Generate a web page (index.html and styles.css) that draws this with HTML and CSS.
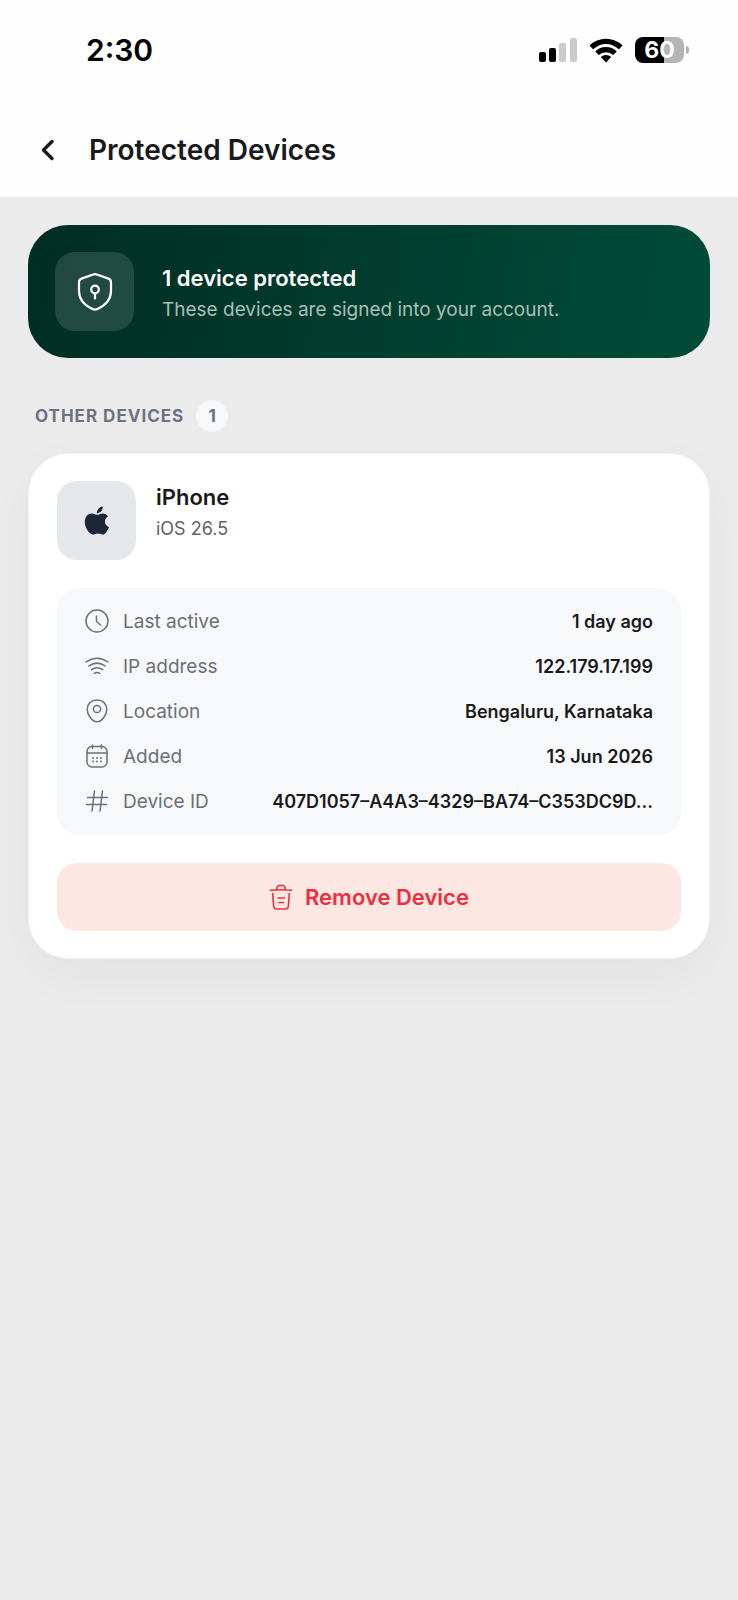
FILE: index.html
```html
<!DOCTYPE html>
<html lang="en">
<head>
  <meta charset="UTF-8">
  <title>Protected Devices</title>
  <meta name="viewport" content="width=device-width, initial-scale=1.0">
  <link rel="stylesheet" href="styles.css">
</head>
<body>
  <header class="top">
    <div class="status-bar">
      <time class="clock">2:30</time>
      <div class="status-icons">
        <svg width="38" height="24" viewBox="0 0 38 24" aria-hidden="true">
          <rect x="0" y="14" width="7" height="10" rx="2"/>
          <rect x="10" y="10" width="7" height="14" rx="2"/>
          <rect x="20" y="5" width="7" height="19" rx="2" fill="#cbcbcb"/>
          <rect x="31" y="0" width="7" height="24" rx="2" fill="#cbcbcb"/>
        </svg>
        <svg width="34" height="25" viewBox="0 0 34 25" aria-hidden="true">
          <path d="M.5 7.600a23.600 23.600 0 0 1 33 0l-3.600 3.700a18.400 18.400 0 0 0-25.800 0z"/>
          <path d="M6.200 13.400a15.400 15.400 0 0 1 21.600 0l-3.700 3.700a10.100 10.100 0 0 0-14.200 0z"/>
          <path d="M11.800 19.100a7.400 7.400 0 0 1 10.400 0L17 24.500z"/>
        </svg>
        <div class="battery">
          <span class="battery-body">60</span>
          <span class="battery-tip"></span>
        </div>
      </div>
    </div>
    <div class="title-bar">
      <button class="back" type="button" aria-label="Back">
        <svg width="14" height="22" viewBox="0 0 14 22" fill="none" stroke="currentColor" stroke-width="3.400" stroke-linecap="round" stroke-linejoin="round">
          <path d="M11 2.500L2.500 11l8.500 8.500"/>
        </svg>
      </button>
      <h1>Protected Devices</h1>
    </div>
  </header>

  <main>
    <section class="banner">
      <div class="tile tile-shield">
        <svg width="36" height="40" viewBox="0 0 36 40" fill="none" stroke="#fff" stroke-width="2.200" stroke-linecap="round" stroke-linejoin="round" aria-hidden="true">
          <path d="M16.200 2.500q1.800-.8 3.600 0L31.500 6.600Q34 7.500 34 10.500V19c0 9-6 14.500-13.500 18q-2.500 1.200-5 0C8 33.500 2 28 2 19v-8.500q0-3 2.500-3.900z"/>
          <circle cx="18" cy="17.500" r="3.800"/>
          <path d="M18 21.500v5"/>
        </svg>
      </div>
      <div class="banner-text">
        <h2>1 device protected</h2>
        <p>These devices are signed into your account.</p>
      </div>
    </section>

    <div class="section-head">
      <h3>OTHER DEVICES</h3>
      <span class="count">1</span>
    </div>

    <article class="card">
      <div class="device">
        <div class="tile tile-apple">
          <svg width="26" height="30" viewBox="0 0 26 30" fill="#1e2738" aria-hidden="true">
            <path d="M18.800.6c.3 3.500-2.700 6.600-6 6.600C12.600 4 15.400.9 18.800.6z"/>
            <path d="M13.200 8.800c1.400 0 3-1.400 5.400-1.400 2.300 0 4.400 1.200 5.500 2.800-4.700 2.900-4 9.100.9 10.900-1 2.900-3.200 6.500-5.200 7.300-2.100.8-3.500-.8-6-.8s-3.800 1.500-5.600.9C4.600 27.200.8 21.600.8 15.700c0-5 3.200-8.300 6.900-8.300 2.300 0 4 1.400 5.500 1.400z"/>
          </svg>
        </div>
        <div class="device-name">
          <h4>iPhone</h4>
          <p>iOS 26.5</p>
        </div>
      </div>

      <dl class="details">
        <div class="row">
          <dt>
            <svg class="icon" viewBox="0 0 24 24" aria-hidden="true"><circle cx="12" cy="12" r="11"/><path d="M11.500 7v5.500l4 3.500"/></svg>
            Last active
          </dt>
          <dd>1 day ago</dd>
        </div>
        <div class="row">
          <dt>
            <svg class="icon" viewBox="0 0 24 24" aria-hidden="true"><path d="M1 8c7-4.800 15-4.800 22 0M3.700 12c5.500-3.800 11.100-3.800 16.600 0M6.500 15.700c3.600-2.500 7.400-2.500 11 0M9.300 19.300c1.800-1.200 3.600-1.200 5.400 0"/></svg>
            IP address
          </dt>
          <dd>122.179.17.199</dd>
        </div>
        <div class="row">
          <dt>
            <svg class="icon" viewBox="0 0 24 24" aria-hidden="true"><path d="M12 1c5.800 0 9.800 4 9.800 9.200 0 5.300-4.800 12.600-9.800 12.600S2.200 15.500 2.200 10.200C2.200 5 6.200 1 12 1z"/><circle cx="12" cy="10" r="3.600"/></svg>
            Location
          </dt>
          <dd>Bengaluru, Karnataka</dd>
        </div>
        <div class="row">
          <dt>
            <svg class="icon" viewBox="0 0 24 24" aria-hidden="true"><rect x="2" y="2.500" width="20" height="20.500" rx="5"/><path d="M2 9h20M7.500 1v3.500M16.500 1v3.500"/><path class="dots" d="M8 14h.01M12 14h.01M16 14h.01M8 17.500h.01M12 17.500h.01M16 17.500h.01"/></svg>
            Added
          </dt>
          <dd>13 Jun 2026</dd>
        </div>
        <div class="row">
          <dt>
            <svg class="icon" viewBox="0 0 24 24" aria-hidden="true"><path d="M9.500 2L7 22M17.500 2L15 22M2.500 8.500h20M1.500 15.500h20"/></svg>
            Device ID
          </dt>
          <dd>407D1057–A4A3–4329–BA74–C353DC9D...</dd>
        </div>
      </dl>

      <button class="remove" type="button">
        <svg width="24" height="26" viewBox="0 0 24 26" fill="none" stroke="currentColor" stroke-width="1.600" stroke-linecap="round" stroke-linejoin="round" aria-hidden="true">
          <path d="M1.500 6.300c7-.8 14-.8 21 0M7.500 5.500C8 2.500 8.500 1.500 10 1.500h4c1.500 0 2 1 2.500 4M3.700 9.500l.9 12.500c.2 2.200 1 3 3 3h8.800c2 0 2.800-.8 3-3l.9-12.500M9 14h6.500M10 18.500h4.500"/>
        </svg>
        Remove Device
      </button>
    </article>
  </main>
</body>
</html>
```
FILE: styles.css
```css
* {
  box-sizing: border-box;
}
body {
  margin: 0;
  min-height: 100vh;
  background: #ebebeb;
  color: #1a1a1c;
  font-family: Inter, "Liberation Sans", sans-serif;
}
h1, h2, h3, h4, p, dl, dd {
  margin: 0;
}
svg {
  display: block;
  flex: none;
}
button {
  border: none;
  font-family: inherit;
  cursor: pointer;
}

/* header */
.top {
  background: #fefefe;
}
.status-bar {
  display: flex;
  align-items: center;
  justify-content: space-between;
  height: 100px;
  padding: 0 49px 0 86px;
}
.clock {
  color: #000;
  font-size: 30px;
  font-weight: 600;
}
.status-icons {
  display: flex;
  align-items: center;
  gap: 12px;
}
.battery {
  display: flex;
  align-items: center;
  gap: 2px;
}
.battery-body {
  width: 49px;
  border-radius: 8px;
  background: linear-gradient(to right, #000 60%, #b5b5b5 60%);
  color: #fff;
  font-size: 23px;
  font-weight: 700;
  line-height: 26px;
  text-align: center;
}
.battery-tip {
  width: 3px;
  height: 8px;
  border-radius: 0 4px 4px 0;
  background: #b5b5b5;
}
.title-bar {
  display: flex;
  align-items: center;
  gap: 21px;
  height: 97px;
  padding: 2px 28px 0;
}
.back {
  display: flex;
  align-items: center;
  justify-content: center;
  width: 40px;
  height: 40px;
  padding: 0;
  background: none;
  color: #1a1a1c;
}
h1 {
  font-size: 28px;
  font-weight: 600;
}

main {
  padding: 28px;
}
.tile {
  display: flex;
  align-items: center;
  justify-content: center;
  flex: none;
  width: 79px;
  height: 79px;
  border-radius: 20px;
}

/* summary banner */
.banner {
  display: flex;
  align-items: center;
  gap: 28px;
  padding: 27px;
  border-radius: 40px;
  background: linear-gradient(100deg, #002d22, #004c38);
  color: #fff;
}
.tile-shield {
  background: rgba(255, 255, 255, 0.13);
}
.banner-text {
  padding-top: 4px;
}
h2 {
  font-size: 22px;
  font-weight: 600;
  line-height: 32px;
}
.banner p {
  color: #a6c0b8;
  font-size: 19px;
  line-height: 32px;
}

.section-head {
  display: flex;
  align-items: center;
  gap: 12px;
  padding: 42px 7px 21px;
}
h3 {
  color: #6b7280;
  font-size: 17px;
  font-weight: 700;
  letter-spacing: 1px;
}
.count {
  width: 32px;
  border-radius: 16px;
  background: #f7f8fa;
  color: #6b7280;
  font-size: 17px;
  font-weight: 700;
  line-height: 32px;
  text-align: center;
}

/* device card */
.card {
  display: flex;
  flex-direction: column;
  gap: 28px;
  padding: 27px 28px;
  border: 1px solid #f1f1f1;
  border-radius: 40px;
  background: #fff;
  box-shadow: 0 16px 48px rgba(0, 0, 0, 0.04);
}
.device {
  display: flex;
  gap: 20px;
}
.tile-apple {
  background: #e5e7eb;
}
h4 {
  font-size: 22px;
  font-weight: 600;
  line-height: 32px;
}
.device-name p {
  color: #5f6165;
  font-size: 18px;
  line-height: 32px;
}
.details {
  display: flex;
  flex-direction: column;
  gap: 19px;
  padding: 21px 28px 20px;
  border-radius: 22px;
  background: #f7f8fa;
  font-size: 18px;
  line-height: 26px;
}
.row {
  display: flex;
  justify-content: space-between;
  gap: 16px;
}
dt {
  display: flex;
  align-items: flex-start;
  gap: 14px;
  color: #6b7076;
  font-size: 19px;
  white-space: nowrap;
}
dd {
  overflow: hidden;
  font-weight: 600;
  text-overflow: ellipsis;
  white-space: nowrap;
}
.icon {
  width: 24px;
  height: 24px;
  fill: none;
  stroke: #6b7280;
  stroke-width: 1.5;
  stroke-linecap: round;
  stroke-linejoin: round;
}
.dots {
  stroke-width: 2;
}
.remove {
  display: flex;
  align-items: center;
  justify-content: center;
  gap: 12px;
  padding: 18px;
  border-radius: 20px;
  background: #fce7e2;
  color: #ec2f3f;
  font-size: 22px;
  font-weight: 600;
  line-height: 32px;
}
```
